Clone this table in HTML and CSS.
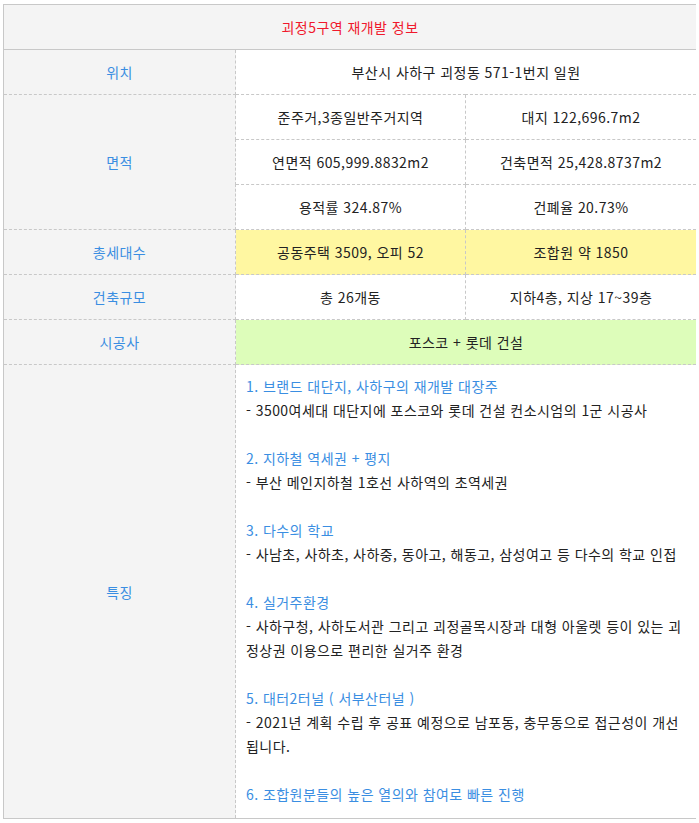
FILE: index.html
```html
<!DOCTYPE html>
<html lang="ko">
<head>
<meta charset="utf-8">
<title>괴정5구역 재개발 정보</title>
<link rel="stylesheet" href="styles.css">
</head>
<body>
<table class="info">
  <colgroup>
    <col class="c-label">
    <col class="c-val">
    <col class="c-val2">
  </colgroup>
  <thead>
    <tr><th colspan="3" class="title">괴정5구역 재개발 정보</th></tr>
  </thead>
  <tbody>
    <tr><th class="label">위치</th><td colspan="2">부산시 사하구 괴정동 571-1번지 일원</td></tr>
    <tr><th class="label" rowspan="3">면적</th><td>준주거,3종일반주거지역</td><td>대지 122,696.7m2</td></tr>
    <tr><td>연면적 605,999.8832m2</td><td>건축면적 25,428.8737m2</td></tr>
    <tr><td>용적률 324.87%</td><td>건폐율 20.73%</td></tr>
    <tr><th class="label">총세대수</th><td class="yellow">공동주택 3509, 오피 52</td><td class="yellow">조합원 약 1850</td></tr>
    <tr><th class="label">건축규모</th><td>총 26개동</td><td>지하4층, 지상 17~39층</td></tr>
    <tr><th class="label">시공사</th><td colspan="2" class="green">포스코 + 롯데 건설</td></tr>
    <tr>
      <th class="label">특징</th>
      <td colspan="2" class="features">
        <p class="hd">1. 브랜드 대단지, 사하구의 재개발 대장주</p>
        <p>- 3500여세대 대단지에 포스코와 롯데 건설 컨소시엄의 1군 시공사</p>
        <p class="gap">&nbsp;</p>
        <p class="hd">2. 지하철 역세권 + 평지</p>
        <p>- 부산 메인지하철 1호선 사하역의 초역세권</p>
        <p class="gap">&nbsp;</p>
        <p class="hd">3. 다수의 학교</p>
        <p>- 사남초, 사하초, 사하중, 동아고, 해동고, 삼성여고 등 다수의 학교 인접</p>
        <p class="gap">&nbsp;</p>
        <p class="hd">4. 실거주환경</p>
        <p>- 사하구청, 사하도서관 그리고 괴정골목시장과 대형 아울렛 등이 있는 괴정상권 이용으로 편리한 실거주 환경</p>
        <p class="gap">&nbsp;</p>
        <p class="hd">5. 대터2터널 ( 서부산터널 )</p>
        <p>- 2021년 계획 수립 후 공표 예정으로 남포동, 충무동으로 접근성이 개선됩니다.</p>
        <p class="gap">&nbsp;</p>
        <p class="hd">6. 조합원분들의 높은 열의와 참여로 빠른 진행</p>
      </td>
    </tr>
  </tbody>
</table>
</body>
</html>
```

FILE: styles.css
```css
html, body {
  background: #ffffff;
}
body {
  margin: 4px 3px;
  font-family: "Noto Sans CJK KR", "Noto Sans", sans-serif;
  font-size: 14px;
  letter-spacing: 0.45px;
  color: #222222;
}
.info {
  width: 693px;
  border-collapse: collapse;
  table-layout: fixed;
  border: 1px solid #c8c8c8;
}
.c-label { width: 232px; }
.c-val { width: 230px; }
.c-val2 { width: 231px; }
.info th,
.info td {
  height: 44px;
  padding: 0 10px;
  border: 1px dashed #c8c8c8;
  text-align: center;
  vertical-align: middle;
  font-weight: normal;
  line-height: 20px;
}
.info .title {
  background: #f4f4f4;
  color: #f0182c;
  border-bottom: 1px solid #c8c8c8;
}
.info .label {
  background: #f4f4f4;
  color: #3a8ee2;
}
.info .yellow { background: #fff7a1; }
.info .green { background: #ddfdba; }
.info .features {
  text-align: left;
  vertical-align: top;
  padding: 9px 10px 12px 10px;
  line-height: 24px;
  word-break: break-all;
}
.features p {
  margin: 0;
}
.features .hd {
  color: #3a8ee2;
}
```
